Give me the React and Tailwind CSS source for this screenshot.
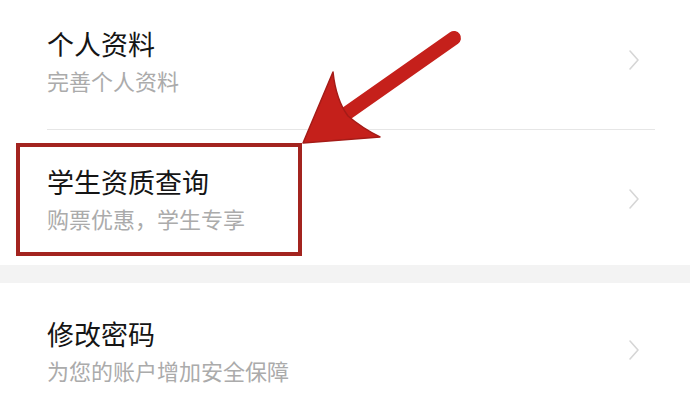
import React from 'react';

const font = { fontFamily: '"Noto Sans CJK SC", "Noto Sans", sans-serif' };

function Chevron() {
  return (
    <svg width="12" height="22" viewBox="0 0 12 22" className="shrink-0">
      <path d="M2 2 L10 11 L2 20" fill="none" stroke="#d6d6d6" strokeWidth="1.6" strokeLinecap="round" strokeLinejoin="round" />
    </svg>
  );
}

function Row({ title, sub, className }) {
  return (
    <div className={`flex items-center pl-[47px] pr-[50px] ${className}`}>
      <div className="flex-1 flex flex-col gap-[5px]">
        <span className="text-[27px] leading-[34px] text-[#151515]">{title}</span>
        <span className="text-[22px] leading-[28px] text-[#ababab]">{sub}</span>
      </div>
      <Chevron />
    </div>
  );
}

export default function App() {
  return (
    <div className="relative w-[690px] h-[412px] overflow-hidden bg-white" style={font}>
      {/* 设置项 */}
      <Row title="个人资料" sub="完善个人资料" className="h-[120px]" />
      <div className="ml-[47px] mr-[35px] h-px bg-[#e6e6e6] mt-[9px]" />
      <Row title="学生资质查询" sub="购票优惠，学生专享" className="h-[135px] pt-[2px]" />
      <div className="h-[18px] bg-[#f3f3f3]" />
      <Row title="修改密码" sub="为您的账户增加安全保障" className="h-[130px] pt-[4px]" />

      {/* 标注框 */}
      <div className="absolute left-[16px] top-[143px] w-[286px] h-[113px] border-[4px] border-[#a3241f]" />

      {/* 箭头 */}
      <svg className="absolute left-0 top-0" width="690" height="412" viewBox="0 0 690 412">
        <line x1="454" y1="38" x2="340" y2="118" stroke="#c5201b" strokeWidth="14" strokeLinecap="round" />
        <path
          d="M303 143 L333 72 Q336 100 348 116 Q362 128 380 137 Z"
          fill="#c5201b"
          stroke="#a51b17"
          strokeWidth="1.5"
          strokeLinejoin="round"
        />
      </svg>
    </div>
  );
}
